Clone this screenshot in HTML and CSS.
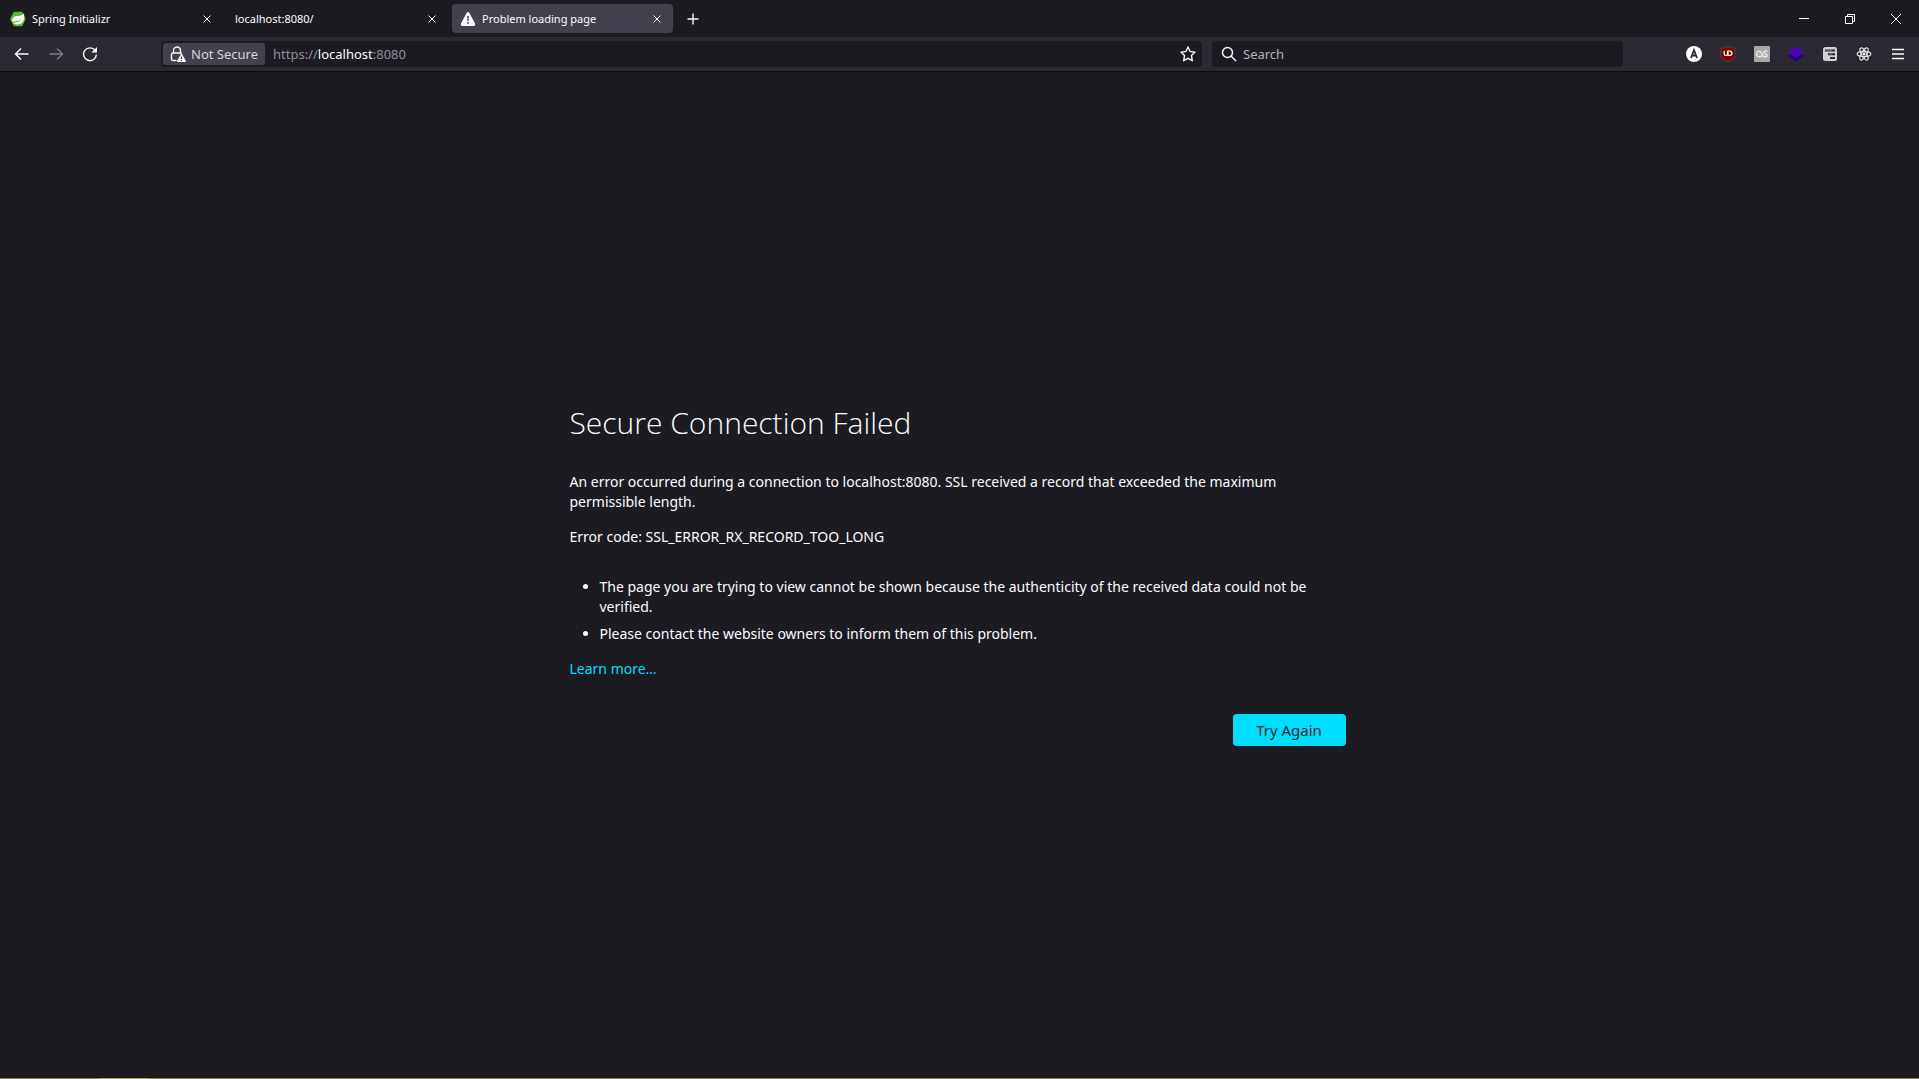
FILE: index.html
```html
<!DOCTYPE html>
<html lang="en">
<head>
<meta charset="utf-8">
<meta name="viewport" content="width=device-width, initial-scale=1">
<title>Problem loading page</title>
<link rel="stylesheet" href="styles.css">
</head>
<body>
<header class="chrome">
  <div class="titlebar">
    <div class="tabs">
      <div class="tab">
        <svg class="tab-icon" viewBox="0 0 16 16" aria-hidden="true"><path d="M4.4.8h7.2q.7 0 1 .6l2.8 5.8q.4.8 0 1.6l-2.8 5.8q-.3.6-1 .6H4.4q-.7 0-1-.6L.4 8.800q-.4-.8 0-1.600L3.400 1.400q.3-.6 1-.6z" fill="#5fb335"/><path d="M14 2.500c.8 4.500.2 10.700-6.200 10.900-2.400.1-4.100-.7-5-1.800 4.500.3 7.700-1.600 9.300-4.400-2.300 2.300-5 3.400-9.700 3.300C1.700 6.500 4.400 5 8 4.900c2.600-.1 4.700-.6 6-2.400z" fill="#fff"/></svg>
        <span class="tab-label">Spring Initializr</span>
        <button class="tab-close" aria-label="Close tab"><svg viewBox="0 0 16 16"><path d="M4.500 4.500l7 7M11.500 4.500l-7 7"/></svg></button>
      </div>
      <div class="tab">
        <span class="tab-label">localhost:8080/</span>
        <button class="tab-close" aria-label="Close tab"><svg viewBox="0 0 16 16"><path d="M4.500 4.500l7 7M11.500 4.500l-7 7"/></svg></button>
      </div>
      <div class="tab tab-active">
        <svg class="tab-icon" viewBox="0 0 16 16" aria-hidden="true"><path d="M6.600 1.900a1.600 1.600 0 0 1 2.800 0l5.600 10.700a1.600 1.600 0 0 1-1.400 2.400H2.400A1.600 1.600 0 0 1 1 12.600z" fill="#fbfbfe"/><path d="M8 5.500v4" stroke="#42414d" stroke-width="1.400" stroke-linecap="round"/><circle cx="8" cy="12" r=".9" fill="#42414d"/></svg>
        <span class="tab-label">Problem loading page</span>
        <button class="tab-close" aria-label="Close tab"><svg viewBox="0 0 16 16"><path d="M4.500 4.500l7 7M11.500 4.500l-7 7"/></svg></button>
      </div>
      <button class="new-tab" aria-label="New tab"><svg viewBox="0 0 16 16"><path d="M8 2.500v11M2.500 8h11"/></svg></button>
    </div>
    <div class="window-controls">
      <button class="window-button" aria-label="Minimize"><svg viewBox="0 0 12 12"><path d="M1 5.500h10"/></svg></button>
      <button class="window-button" aria-label="Restore"><svg viewBox="0 0 12 12"><path d="M1.500 3.500h7v7h-7zM3.500 3.500v-2h7v7h-2"/></svg></button>
      <button class="window-button" aria-label="Close"><svg viewBox="0 0 12 12"><path d="M1 1l10 10M11 1L1 11"/></svg></button>
    </div>
  </div>
  <nav class="toolbar" aria-label="Navigation">
    <button class="tool" aria-label="Back"><svg viewBox="0 0 16 16"><path d="M14.500 8H1.500M7 2.500L1.500 8 7 13.500"/></svg></button>
    <button class="tool" aria-label="Forward" disabled><svg viewBox="0 0 16 16"><path d="M1.500 8h13M9 2.500L14.500 8 9 13.500"/></svg></button>
    <button class="tool" aria-label="Reload"><svg viewBox="0 0 16 16"><path d="M13.200 4.500A6.400 6.400 0 1 0 14.400 8.500"/><path d="M15 1v5.500H9.500z" fill="#fbfbfe" stroke="none"/></svg></button>
    <div class="spring"></div>
    <div class="field urlbar">
      <button class="identity">
        <svg viewBox="0 0 16 16" aria-hidden="true"><path d="M6.500 14.500H3A1.500 1.500 0 0 1 1.500 13V8.500Q1.500 7 3 7H10q1.500 0 1.500 1M3.500 7V4.500a3.500 3.500 0 0 1 7 0V7" fill="none" stroke="#fbfbfe" stroke-width="1.400"/><path d="M10.900 8.200q.6-.9 1.200 0l3.700 6.600q.3 1-.6 1.200H7.800q-.9-.2-.6-1.200z" fill="#fbfbfe"/><path d="M11.500 10.500v2.500M11.500 14v1" stroke="#42414d" stroke-width="1.200"/></svg>
        <span>Not Secure</span>
      </button>
      <a class="address" href="#">https://<span class="host">localhost</span>:8080</a>
      <button class="bookmark" aria-label="Bookmark this page"><svg viewBox="0 0 16 16"><path d="M8 1.200l2.100 4.200 4.800.8-3.400 3.400.7 4.900L8 12.300l-4.200 2.200.7-4.900L1.100 6.200l4.800-.8z"/></svg></button>
    </div>
    <div class="field searchbar">
      <svg viewBox="0 0 16 16" aria-hidden="true"><circle cx="6.500" cy="6.500" r="5"/><path d="M10.200 10.200l4.800 4.800"/></svg>
      <input class="search-input" type="search" placeholder="Search" aria-label="Search">
    </div>
    <div class="spring"></div>
    <button class="tool" aria-label="Account"><svg viewBox="0 0 16 16"><circle cx="8" cy="8" r="8" fill="#fff" stroke="none"/><path d="M5 12l3-8 3 8M6 9.500h4" stroke="#2b2a33" stroke-width="1.800"/></svg></button>
    <button class="tool" aria-label="uBlock"><svg viewBox="0 0 16 16"><path d="M8 .3c2 1.300 4 1.900 7 1.900v5.300c0 4-2.500 6.300-7 8.300-4.500-2-7-4.300-7-8.300V2.200C4 2.200 6 1.600 8 .3z" fill="#800000" stroke="#5f5960" stroke-width=".6"/><path d="M4.200 5v3q0 1.500 1.500 1.500T7.500 8V5M8 5v4.500h1.500q2.500 0 2.500-2.200T9.500 5z" stroke="#fff" stroke-width="1.200"/></svg></button>
    <button class="tool" aria-label="Last.fm"><svg viewBox="0 0 16 16"><rect width="16" height="16" rx="1" fill="#a8a8a8" stroke="none"/><path d="M7.800 9.800C6.500 11.200 2.500 11.400 2.500 8S6 5 7 6.200L9 10q1 1 2.600.8Q13.500 10.500 13.300 9.200C13 7.700 9.700 8.500 9.700 6.500c0-1.700 2.600-1.800 3.500-.8" stroke="#eee" stroke-width="1.300"/></svg></button>
    <button class="tool" aria-label="Layers"><svg viewBox="0 0 16 16"><path d="M0 10l8-5 8 5-8 5.500z" fill="#26007e" stroke="none"/><path d="M0 6.500L8 .5l8 6-8 5.500z" fill="#4a05b5" stroke="none"/></svg></button>
    <button class="tool" aria-label="Tree Style Tab"><svg viewBox="0 0 16 16"><rect x="1" y="1" width="14" height="14" rx="2.500" fill="#d2d2d6" stroke="none"/><path d="M3 3.500h10v2H3zM6 7.200h7v2H6zM8 11h5v2H8z" fill="#2b2a33" stroke="none"/><path d="M4 4.500h6M7.500 8.200H10" stroke="#77777f" stroke-width=".8"/></svg></button>
    <button class="tool" aria-label="React Developer Tools"><svg viewBox="0 0 16 16"><rect x="1" width="14" height="16" fill="#222228" stroke="none"/><g stroke="#dedee0" stroke-width="1.200"><ellipse cx="8" cy="8" rx="6.800" ry="2.600"/><ellipse cx="8" cy="8" rx="6.800" ry="2.600" transform="rotate(60 8 8)"/><ellipse cx="8" cy="8" rx="6.800" ry="2.600" transform="rotate(120 8 8)"/></g><circle cx="8" cy="8" r="1.400" fill="#fff" stroke="none"/></svg></button>
    <button class="tool" aria-label="Application menu"><svg viewBox="0 0 16 16"><path d="M2 3.500h12M2 8h12M2 12.500h12"/></svg></button>
  </nav>
</header>
<main class="page">
  <section class="error">
    <h1 class="error-title">Secure Connection Failed</h1>
    <p class="error-text">An error occurred during a connection to localhost:8080. SSL received a record that exceeded the maximum permissible length.</p>
    <p class="error-text">Error code: SSL_ERROR_RX_RECORD_TOO_LONG</p>
    <ul class="error-list">
      <li>The page you are trying to view cannot be shown because the authenticity of the received data could not be verified.</li>
      <li>Please contact the website owners to inform them of this problem.</li>
    </ul>
    <p class="error-text"><a class="learn-more" href="#">Learn more…</a></p>
    <div class="actions"><button class="try-again">Try Again</button></div>
  </section>
</main>
<footer class="taskbar-edge"><div class="taskbar-item"></div></footer>
</body>
</html>
```
FILE: styles.css
```css
* {
  box-sizing: border-box;
}

body {
  margin: 0;
  min-height: 100vh;
  display: flex;
  flex-direction: column;
  background: #1c1b22;
  color: #fbfbfe;
  font: 14px/20px "Segoe UI", "Noto Sans", sans-serif;
}

button {
  margin: 0;
  padding: 0;
  border: 0;
  background: none;
  color: inherit;
  font: inherit;
}

svg {
  display: block;
  flex: none;
  width: 16px;
  height: 16px;
  fill: none;
  stroke: #fbfbfe;
  stroke-width: 1.4;
}

.tab-icon {
  stroke: none;
}

/* Tab strip */
.titlebar {
  display: flex;
  justify-content: space-between;
  height: 37px;
}

.tabs {
  display: flex;
  align-items: center;
  gap: 4px;
  padding-left: 2px;
}

.tab {
  display: flex;
  align-items: center;
  gap: 6px;
  width: 221px;
  height: 29px;
  padding: 0 8px;
  border-radius: 4px;
  font-size: 11px;
}

.tab-active {
  background: #42414d;
}

.tab-label {
  flex: 1;
}

.tab-close svg {
  stroke-width: 1;
}

.new-tab {
  display: grid;
  place-items: center;
  width: 32px;
  height: 32px;
}

.window-controls {
  display: flex;
}

.window-button {
  display: grid;
  place-items: center;
  width: 46px;
}

.window-button svg {
  width: 12px;
  height: 12px;
  stroke: #fff;
  stroke-width: 1;
}

/* Navigation toolbar */
.toolbar {
  display: flex;
  align-items: center;
  height: 35px;
  padding: 0 4px 0 5px;
  background: #2b2a33;
  border-bottom: 1px solid #0c0c0d;
}

.tool {
  display: grid;
  place-items: center;
  flex: none;
  width: 34px;
  height: 34px;
}

.tool:disabled {
  opacity: 0.4;
}

.spring {
  flex: 54 1 0;
}

.field {
  display: flex;
  align-items: center;
  height: 26px;
  border-radius: 4px;
  background: #1c1b22;
  font-size: 13px;
}

.urlbar {
  flex: 1033 1 0;
  margin-right: 10px;
  padding: 0 6px 0 2px;
}

.identity {
  display: flex;
  align-items: center;
  gap: 5px;
  height: 22px;
  padding: 0 7px;
  border-radius: 3px;
  background: #42414d;
  color: #d5d5da;
}

.identity svg {
  stroke: none;
}

.address {
  flex: 1;
  padding-left: 8px;
  color: #8f8f98;
  text-decoration: none;
}

.host {
  color: #fbfbfe;
}

.searchbar {
  flex: 393 1 0;
  gap: 6px;
  padding: 0 9px;
}

.search-input {
  flex: 1;
  min-width: 0;
  padding: 0;
  border: 0;
  outline: 0;
  background: none;
  color: #fbfbfe;
  font: inherit;
}

.search-input::placeholder {
  color: #b0b0b6;
  opacity: 1;
}

/* Error page */
.page {
  flex: 1;
  display: flex;
  align-items: center;
  justify-content: center;
  padding: 0 48px 4px;
}

.error {
  width: 100%;
  max-width: 780px;
}

.error-title {
  margin: 0 0 27px;
  font: 300 30px/44px "Segoe UI", "Open Sans", sans-serif;
}

.error-text {
  margin: 0 0 15px;
}

.error-list {
  margin: 30px 0 15px;
  padding-left: 30px;
}

.error-list li + li {
  margin-top: 7px;
}

.learn-more {
  color: #00ddff;
  text-decoration: none;
}

.actions {
  display: flex;
  justify-content: flex-end;
  margin-top: 35px;
  padding: 0 4px;
}

.try-again {
  min-width: 113px;
  height: 32px;
  border-radius: 4px;
  background: #00ddff;
  color: #2b2a33;
  font-size: 15px;
}

.taskbar-edge {
  height: 1px;
  padding-left: 100px;
  background: #8b8560;
}

.taskbar-item {
  width: 48px;
  height: 1px;
  background: #a39f62;
}
```
